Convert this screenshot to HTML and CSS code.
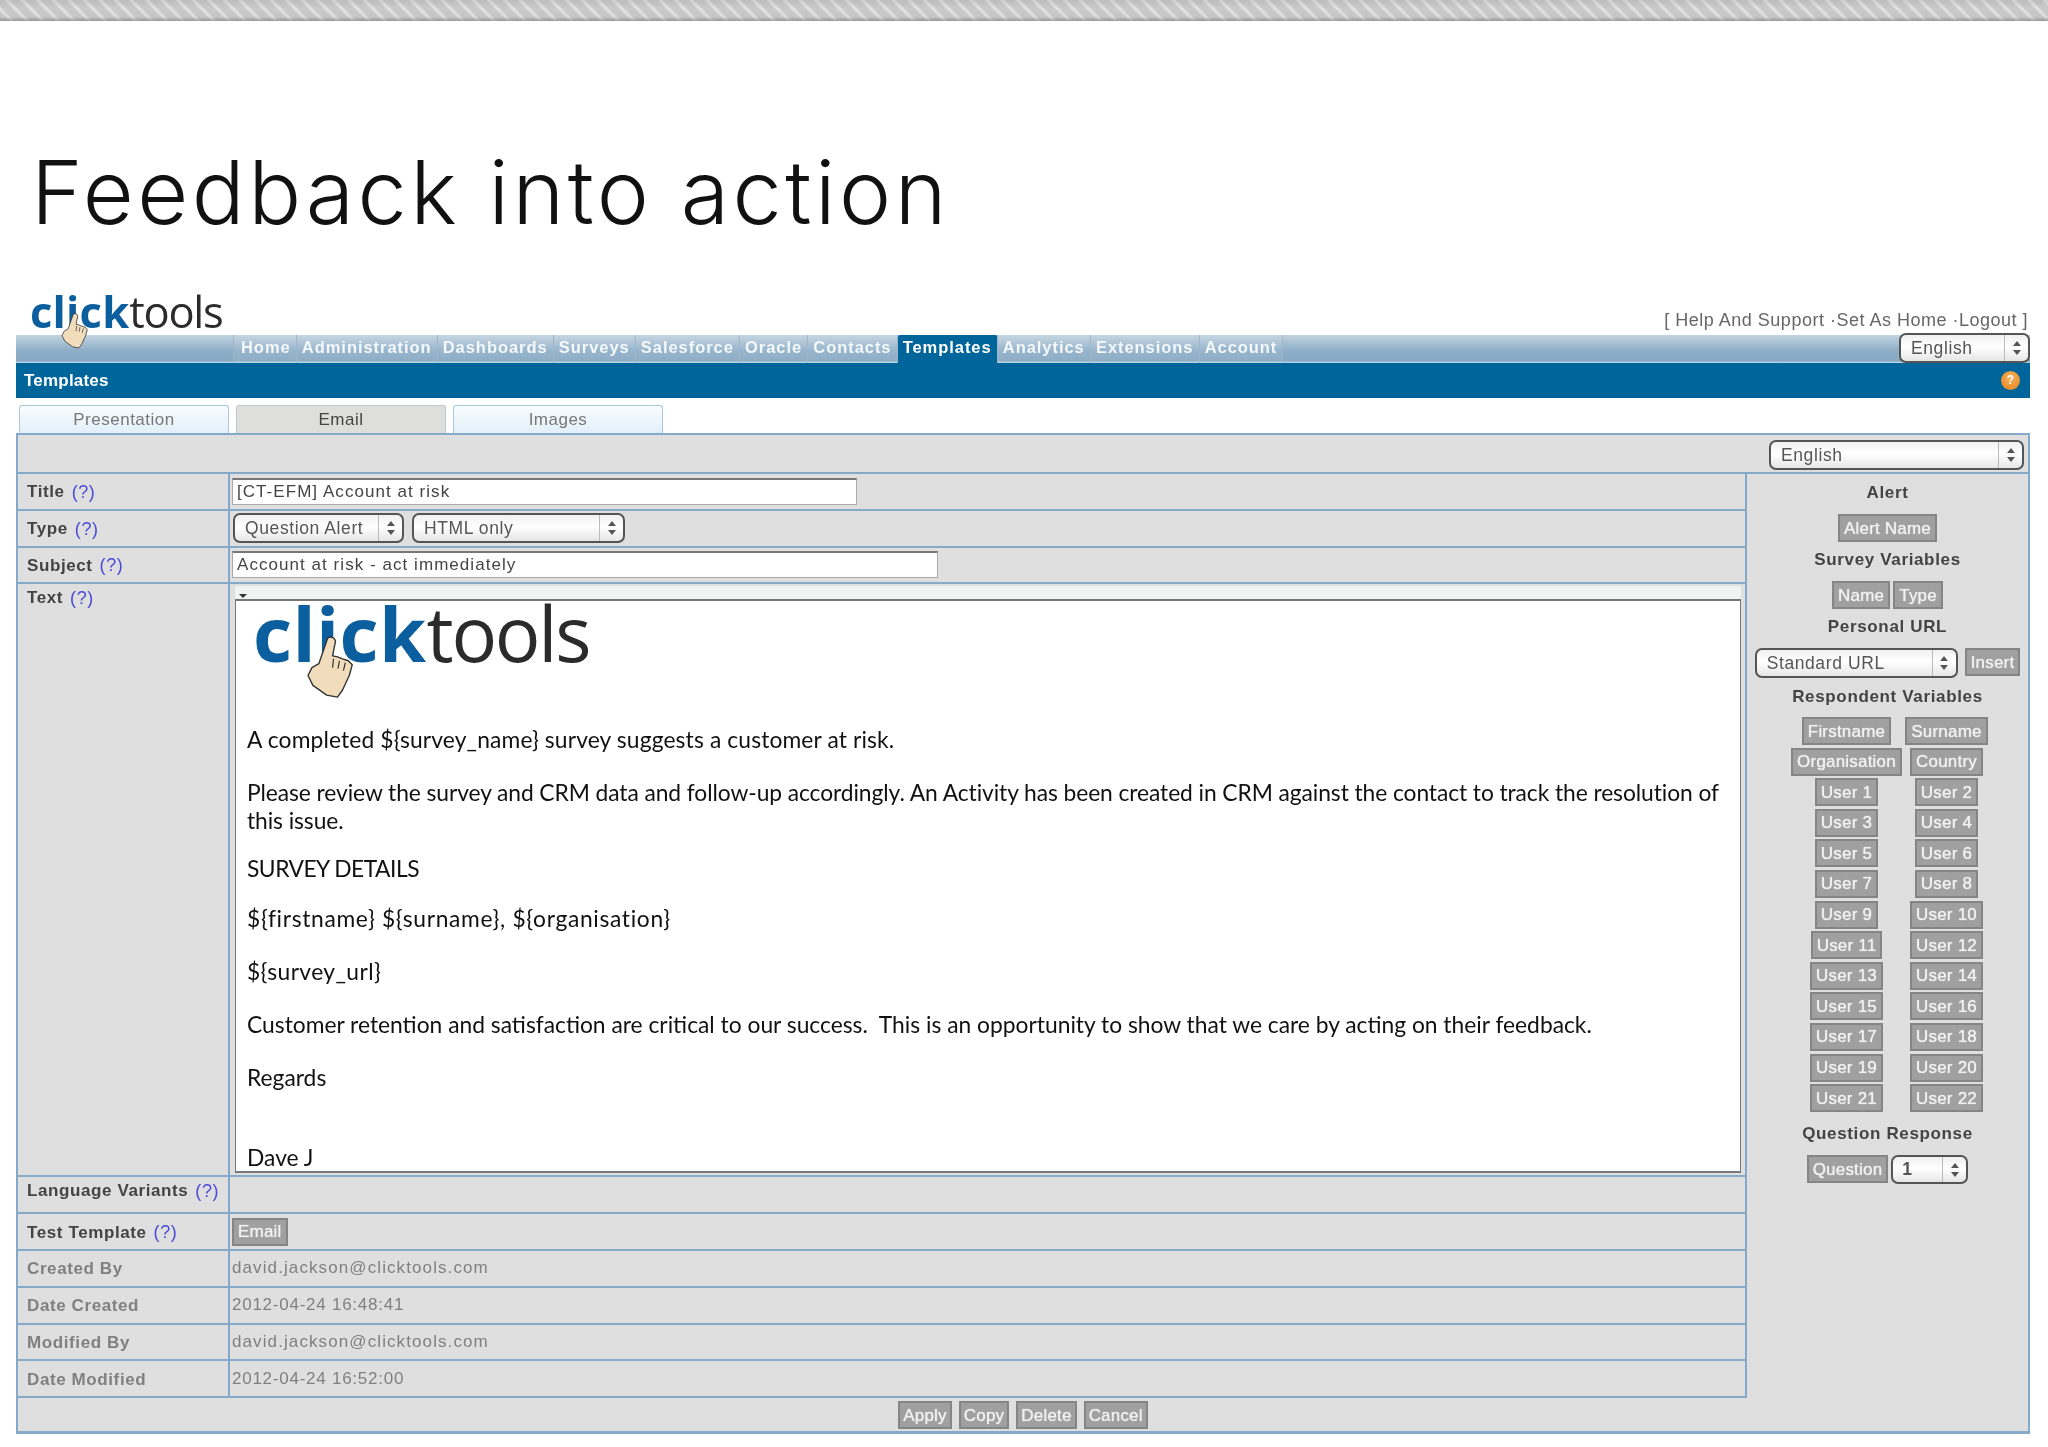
FILE: index.html
```html
<!DOCTYPE html>
<html lang="en">
<head>
<meta charset="utf-8">
<title>Feedback into action</title>
<link rel="stylesheet" href="styles.css">
</head>
<body>
<div class="hatch"></div>
<header class="slide-head"><h1>Feedback into action</h1></header>
<main class="app">
  <div class="topline">
    <div class="logo logo-small"><span class="blue">click</span><span class="dark">tools</span>
      <svg class="hand" viewBox="0 0 46 63"><path d="M20 2C23 0 27 1 28 5L25 20L30 21L35 23L41 25L45 29L42 40L35 55L30 62L19 60L5 50L0 40L4 32L11 28Z"/><path d="M26 23l-1 9M32 25l-1.5 8M38 27l-2 8"/></svg>
    </div>
    <div class="links">[ Help And Support ·Set As Home ·Logout ]</div>
  </div>
  <nav class="nav">
    <a>Home</a><a>Administration</a><a>Dashboards</a><a>Surveys</a><a>Salesforce</a><a>Oracle</a><a>Contacts</a><a class="active">Templates</a><a>Analytics</a><a>Extensions</a><a>Account</a>
    <div class="select sel-nav"><span>English</span><i class="stepper"><svg viewBox="0 0 8 14"><path d="M4 0L8 5H0ZM4 14L0 9H8Z"/></svg></i></div>
  </nav>
  <div class="titlebar"><span>Templates</span><b class="help-dot">?</b></div>
  <div class="tabs"><div class="tab">Presentation</div><div class="tab tab-on">Email</div><div class="tab">Images</div></div>
  <section class="panel">
    <div class="lang-row"><div class="select sel-lang"><span>English</span><i class="stepper"><svg viewBox="0 0 8 14"><path d="M4 0L8 5H0ZM4 14L0 9H8Z"/></svg></i></div></div>
    <div class="body">
      <div class="form">
        <div class="row"><div class="label">Title <a>(?)</a></div><div class="value"><div class="input input-title">[CT-EFM] Account at risk</div></div></div>
        <div class="row"><div class="label">Type <a>(?)</a></div><div class="value value-selects">
          <div class="select sel-type"><span>Question Alert</span><i class="stepper"><svg viewBox="0 0 8 14"><path d="M4 0L8 5H0ZM4 14L0 9H8Z"/></svg></i></div>
          <div class="select sel-html"><span>HTML only</span><i class="stepper"><svg viewBox="0 0 8 14"><path d="M4 0L8 5H0ZM4 14L0 9H8Z"/></svg></i></div>
        </div></div>
        <div class="row"><div class="label">Subject <a>(?)</a></div><div class="value"><div class="input input-subject">Account at risk - act immediately</div></div></div>
        <div class="row row-text"><div class="label label-top">Text <a>(?)</a></div>
          <div class="value value-editor">
            <div class="toolbar"><i class="caret"></i></div>
            <div class="editor">
              <div class="logo logo-big"><span class="blue">click</span><span class="dark">tools</span>
                <svg class="hand" viewBox="0 0 46 63"><path d="M20 2C23 0 27 1 28 5L25 20L30 21L35 23L41 25L45 29L42 40L35 55L30 62L19 60L5 50L0 40L4 32L11 28Z"/><path d="M26 23l-1 9M32 25l-1.5 8M38 27l-2 8"/></svg>
              </div>
              <p class="p-first">A completed ${survey_name} survey suggests a customer at risk.</p>
              <p class="p-review">Please review the survey and CRM data and follow-up accordingly. An Activity has been created in CRM against the contact to track the resolution of this issue.</p>
              <p class="p-tight">SURVEY DETAILS</p>
              <p class="p-mid">${firstname} ${surname}, ${organisation}</p>
              <p class="p-url">${survey_url}</p>
              <p>Customer retention and satisfaction are critical to our success.&nbsp; This is an opportunity to show that we care by acting on their feedback.</p>
              <p>Regards</p>
              <p class="p-sign">Dave J</p>
            </div>
          </div>
        </div>
        <div class="row"><div class="label label-lang">Language Variants <a>(?)</a></div><div class="value"></div></div>
        <div class="row"><div class="label">Test Template <a>(?)</a></div><div class="value"><button class="btn btn-test">Email</button></div></div>
        <div class="row row-muted"><div class="label">Created By</div><div class="value value-email">david.jackson@clicktools.com</div></div>
        <div class="row row-muted"><div class="label">Date Created</div><div class="value">2012-04-24 16:48:41</div></div>
        <div class="row row-muted"><div class="label">Modified By</div><div class="value value-email">david.jackson@clicktools.com</div></div>
        <div class="row row-muted"><div class="label">Date Modified</div><div class="value">2012-04-24 16:52:00</div></div>
      </div>
      <aside class="vars">
        <h4 class="h-alert">Alert</h4>
        <div class="btn-line"><button class="btn">Alert Name</button></div>
        <h4>Survey Variables</h4>
        <div class="btn-line btn-line-tight"><button class="btn">Name</button><button class="btn">Type</button></div>
        <h4>Personal URL</h4>
        <div class="btn-line url-line"><div class="select sel-url"><span>Standard URL</span><i class="stepper"><svg viewBox="0 0 8 14"><path d="M4 0L8 5H0ZM4 14L0 9H8Z"/></svg></i></div><button class="btn">Insert</button></div>
        <h4 class="h-respondent">Respondent Variables</h4>
        <div class="var-grid">
          <button class="btn">Firstname</button><button class="btn">Surname</button>
          <button class="btn">Organisation</button><button class="btn">Country</button>
          <button class="btn">User 1</button><button class="btn">User 2</button>
          <button class="btn">User 3</button><button class="btn">User 4</button>
          <button class="btn">User 5</button><button class="btn">User 6</button>
          <button class="btn">User 7</button><button class="btn">User 8</button>
          <button class="btn">User 9</button><button class="btn">User 10</button>
          <button class="btn">User 11</button><button class="btn">User 12</button>
          <button class="btn">User 13</button><button class="btn">User 14</button>
          <button class="btn">User 15</button><button class="btn">User 16</button>
          <button class="btn">User 17</button><button class="btn">User 18</button>
          <button class="btn">User 19</button><button class="btn">User 20</button>
          <button class="btn">User 21</button><button class="btn">User 22</button>
        </div>
        <h4 class="h-question">Question Response</h4>
        <div class="btn-line btn-line-tight"><button class="btn">Question</button><div class="select sel-q"><span>1</span><i class="stepper"><svg viewBox="0 0 8 14"><path d="M4 0L8 5H0ZM4 14L0 9H8Z"/></svg></i></div></div>
      </aside>
    </div>
    <div class="actions"><button class="btn">Apply</button><button class="btn">Copy</button><button class="btn">Delete</button><button class="btn">Cancel</button></div>
  </section>
</main>
</body>
</html>
```

FILE: styles.css
```css
* { box-sizing: border-box; }
html, body { margin: 0; padding: 0; background: #fff; }
body { width: 2048px; height: 1447px; overflow: hidden; font-family: "Liberation Sans", Arial, sans-serif; color: #444; }

.hatch {
  height: 21px;
  background:
    linear-gradient(180deg, rgba(150,150,150,.25) 0, rgba(255,255,255,0) 40%, rgba(120,120,120,.05) 80%, rgba(110,110,110,.55) 100%),
    repeating-linear-gradient(45deg, #cacaca 0, #cacaca 6px, #e4e4e4 8px, #e4e4e4 9px, #cacaca 11px);
}
.slide-head { height: 264px; padding: 119px 0 0 31px; }
h1 { margin: 0; font: 300 88px/1.2 "Inter", "Lato", sans-serif; letter-spacing: 3.5px; color: #111; white-space: nowrap; }

.app { width: 2014px; margin-left: 16px; filter: blur(.5px); font-size: 17px; letter-spacing: .6px; }
.topline { height: 50px; display: flex; justify-content: space-between; align-items: flex-end; }
.links { color: #666; padding: 0 2px 4px 0; font-size: 18px; letter-spacing: .5px; white-space: nowrap; }

.logo { position: relative; font-family: "Open Sans", sans-serif; line-height: 1; white-space: nowrap; display: inline-block; z-index: 2; }
.logo .blue { color: #0c5f9e; font-weight: 700; letter-spacing: .005em; }
.logo .dark { color: #2b2b2b; font-weight: 400; letter-spacing: -.03em; }
.logo-small { font-size: 43.5px; margin-left: 14px; padding-bottom: 2px; }
.logo-big { font-size: 76px; display: block; width: 345px; margin-left: 6px; line-height: .84; }
.hand { position: absolute; left: .73em; top: .55em; width: .595em; height: .82em; overflow: visible; }
.logo-big .hand { top: .46em; }
.hand path { fill: #f1dcbb; stroke: #333; stroke-width: 1.4; stroke-linejoin: round; }
.hand path + path { fill: none; stroke-width: 1.2; }

.nav { height: 28px; padding-left: 217px; display: flex; align-items: stretch; background: linear-gradient(180deg, #c2d3e0 0, #8fafc8 55%, #86a8c2 92%, #c4dcec 100%); }
.nav a { padding: 0 5.1px; line-height: 25px; color: #f4f8fb; font-weight: 700; font-size: 16.5px; letter-spacing: .95px; border-right: 1px solid #9db6ca; white-space: nowrap; background: rgba(255,255,255,.08); }
.nav a:first-child { border-left: 1px solid #9db6ca; padding-left: 7px; }
.nav a.active { background: #00659b; color: #fff; border-radius: 2px 2px 0 0; }

.select { display: flex; align-items: center; justify-content: space-between; height: 30px; border: 2px solid #555; border-radius: 7px; background: linear-gradient(180deg, #f0f0f0 0, #fff 45%, #e6e6e6 100%); font-size: 17.5px; color: #555; padding-left: 10px; letter-spacing: .6px; }
.stepper { display: flex; align-items: center; justify-content: center; width: 24px; height: 100%; border-left: 1px solid #bbb; flex: none; }
.stepper svg { width: 8px; height: 14px; }
.stepper path { fill: #555; }
.sel-nav { width: 131px; margin: -2px 0 0 auto; }
.sel-lang { width: 255px; }
.sel-type { width: 171px; }
.sel-html { width: 213px; }
.sel-url { width: 203px; height: 30px; }
.sel-q { width: 77px; height: 29px; padding-left: 9px; font-weight: 700; }

.titlebar { height: 35px; background: #00659b; display: flex; justify-content: space-between; align-items: center; padding: 0 10px 0 8px; color: #fff; font-weight: 700; font-size: 17px; letter-spacing: .2px; }
.help-dot { width: 19px; height: 19px; border-radius: 50%; background: radial-gradient(circle at 50% 35%, #f6b25a, #e5801c); color: #fff; font-size: 12px; line-height: 19px; text-align: center; letter-spacing: 0; }

.tabs { display: flex; gap: 7px; padding: 7px 0 0 3px; height: 35px; }
.tab { width: 210px; text-align: center; line-height: 27px; color: #777; border: 1px solid #a8c6dc; border-bottom: 0; border-radius: 3px 3px 0 0; background: linear-gradient(180deg, #f8fcfe, #e2f0f9); font-size: 17px; letter-spacing: .5px; }
.tab-on { background: #dededd; color: #444; border-color: #bcc; }

.panel { height: 1001px; background: #e0dfdf; border: 2px solid #84a9c9; border-bottom-width: 3px; display: flex; flex-direction: column; }
.lang-row { height: 39px; flex: none; display: flex; justify-content: flex-end; align-items: flex-start; padding: 5px 4px 0 0; border-bottom: 2px solid #84a9c9; }
.body { flex: 1; display: flex; min-height: 0; }
.form { flex: 1; display: flex; flex-direction: column; border-right: 2px solid #84a9c9; }
.row { display: grid; grid-template-columns: 212px 1fr; flex: none; height: 36.8px; border-bottom: 2px solid #84a9c9; }
.row-text { height: 593px; }
.label { border-right: 2px solid #84a9c9; padding: 2px 0 0 9px; display: flex; align-items: center; gap: 7px; font-weight: 700; color: #444; white-space: nowrap; }
.label a { font-weight: 400; color: #4b4bd8; font-size: 18px; }
.label-top { align-items: flex-start; padding-top: 4px; }
.label-lang { align-items: flex-start; padding-top: 4px; }
.value { display: flex; align-items: center; padding-left: 2px; min-width: 0; }
.value-selects { gap: 8px; padding-left: 3px; }
.row-muted .label, .row-muted .value { color: #808080; letter-spacing: .75px; }
.row-muted .label { letter-spacing: .6px; }
.row-muted .value-email { letter-spacing: 1.1px; }
.input { height: 27px; background: #fff; border: 1px solid #aaa; border-top: 2px solid #777; line-height: 24px; padding-left: 4px; color: #444; letter-spacing: 1.05px; }
.input-title { width: 625px; }
.input-subject { width: 706px; }
.value-editor { flex-direction: column; align-items: stretch; padding: 2px 4px 4px 5px; }
.toolbar { height: 13px; background: #f0f3f1; position: relative; }
.caret { position: absolute; left: 4px; top: 8px; border: 4px solid transparent; border-top: 4px solid #333; border-bottom: 0; }
.editor { flex: 1; background: #fff; border: 2px solid #777; border-width: 2px 1px; padding: 0 0 0 11px; color: #111; font: 400 22.8px/28px "Lato", "Open Sans", sans-serif; letter-spacing: 0; }
.editor p { margin: 25px 0 0; }
.editor .p-first { margin-top: 60px; letter-spacing: .13px; }
.editor .p-review { letter-spacing: -.08px; }
.editor .p-tight { margin-top: 20px; letter-spacing: -.5px; }
.editor .p-mid { margin-top: 22px; letter-spacing: .67px; }
.editor .p-url { letter-spacing: .4px; }
.editor .p-sign { margin-top: 52px; }

.vars { width: 281px; flex: none; display: flex; flex-direction: column; align-items: center; }
.vars h4 { margin: 7px 0 0; height: 22px; line-height: 22px; font-size: 17px; letter-spacing: .65px; color: #444; font-weight: 700; white-space: nowrap; }
.vars .h-alert { margin-top: 8px; }
.vars .h-respondent { margin-top: 8px; }
.vars .h-question { margin-top: 11px; }
.btn-line { display: flex; justify-content: center; gap: 2px; margin-top: 10px; }
.btn-line-tight { gap: 3px; }
.url-line { gap: 7px; }
.btn { height: 28px; padding: 0 4px; border: 2px solid #858585; background: #a0a0a0; color: #f0f0f0; font: 400 17px/1 "Liberation Sans", Arial, sans-serif; letter-spacing: .2px; white-space: nowrap; text-shadow: 0 0 1px #fff; }
.var-grid { display: grid; grid-template-columns: 100px 100px; justify-items: center; row-gap: 2.6px; margin: 9px 0 0 18px; }
.actions { height: 33px; flex: none; display: flex; justify-content: center; gap: 7px; padding-top: 3px; }
.actions .btn { padding: 0 3px; }
```
